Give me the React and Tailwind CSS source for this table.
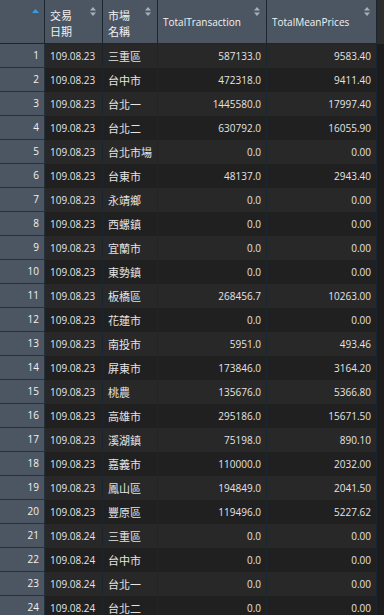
import React from "react";

const rows = [
  ["109.08.23", "三重區", "587133.0", "9583.40"],
  ["109.08.23", "台中市", "472318.0", "9411.40"],
  ["109.08.23", "台北一", "1445580.0", "17997.40"],
  ["109.08.23", "台北二", "630792.0", "16055.90"],
  ["109.08.23", "台北市場", "0.0", "0.00"],
  ["109.08.23", "台東市", "48137.0", "2943.40"],
  ["109.08.23", "永靖鄉", "0.0", "0.00"],
  ["109.08.23", "西螺鎮", "0.0", "0.00"],
  ["109.08.23", "宜蘭市", "0.0", "0.00"],
  ["109.08.23", "東勢鎮", "0.0", "0.00"],
  ["109.08.23", "板橋區", "268456.7", "10263.00"],
  ["109.08.23", "花蓮市", "0.0", "0.00"],
  ["109.08.23", "南投市", "5951.0", "493.46"],
  ["109.08.23", "屏東市", "173846.0", "3164.20"],
  ["109.08.23", "桃農", "135676.0", "5366.80"],
  ["109.08.23", "高雄市", "295186.0", "15671.50"],
  ["109.08.23", "溪湖鎮", "75198.0", "890.10"],
  ["109.08.23", "嘉義市", "110000.0", "2032.00"],
  ["109.08.23", "鳳山區", "194849.0", "2041.50"],
  ["109.08.23", "豐原區", "119496.0", "5227.62"],
  ["109.08.24", "三重區", "0.0", "0.00"],
  ["109.08.24", "台中市", "0.0", "0.00"],
  ["109.08.24", "台北一", "0.0", "0.00"],
  ["109.08.24", "台北二", "0.0", "0.00"],
];

function SortBoth() {
  return (
    <svg width="6" height="9" viewBox="0 0 6 9" className="absolute top-[7px] right-[6px]">
      <polygon points="0,3.5 3,0 6,3.5" fill="#a9b0b7" />
      <polygon points="0,5.5 6,5.5 3,9" fill="#a9b0b7" />
    </svg>
  );
}

function SortAsc() {
  return (
    <svg width="7" height="4" viewBox="0 0 7 4" className="absolute top-[9px] right-[5px]">
      <polygon points="0,4 3.5,0 7,4" fill="#3d9be0" />
    </svg>
  );
}

const cjk = { fontFamily: '"Noto Sans CJK TC", "Open Sans", sans-serif' };

export default function App() {
  return (
    <div
      className="w-[384px] h-[615px] overflow-hidden bg-[#1c1c1c] flex"
      style={{ fontFamily: '"Open Sans", "Noto Sans CJK TC", sans-serif' }}
    >
      <div className="w-[377px] grid grid-cols-[45px_58px_55px_109px_110px] auto-rows-min content-start">
        <div className="relative h-[44px] bg-[#4b5662] border-r border-b border-[#1b2631]">
          <SortAsc />
        </div>
        <div className="relative h-[44px] bg-[#4b5662] border-r border-b border-[#1b2631] flex items-center pl-[5px] pt-[2px]">
          <div className="text-[11px] leading-[16px] text-[#f2f2f2]" style={cjk}>
            交易<br />日期
          </div>
          <SortBoth />
        </div>
        <div className="relative h-[44px] bg-[#4b5662] border-r border-b border-[#1b2631] flex items-center pl-[5px] pt-[2px]">
          <div className="text-[11px] leading-[16px] text-[#f2f2f2]" style={cjk}>
            市場<br />名稱
          </div>
          <SortBoth />
        </div>
        <div className="relative h-[44px] bg-[#4b5662] border-r border-b border-[#1b2631] flex items-center pl-[5px] pt-[2px]">
          <div className="text-[10px] text-[#f2f2f2]">TotalTransaction</div>
          <SortBoth />
        </div>
        <div className="relative h-[44px] bg-[#4b5662] border-r border-b border-[#1b2631] flex items-center pl-[5px] pt-[2px]">
          <div className="text-[10px] text-[#f2f2f2]">TotalMeanPrices</div>
          <SortBoth />
        </div>

        {rows.map((r, i) => {
          const bg = i % 2 === 0 ? "bg-[#282828]" : "bg-[#202020]";
          return (
            <React.Fragment key={i}>
              <div className="h-[24px] bg-[#4b5662] border-r border-b border-[#25313c] flex items-center justify-end pr-[5px] text-[10px] text-[#f2f2f2]">
                {i + 1}
              </div>
              <div className={`h-[24px] ${bg} border-r border-[#1a2532] flex items-center pl-[5px] text-[10px] text-[#e4e4e4]`}>
                {r[0]}
              </div>
              <div className={`h-[24px] ${bg} border-r border-[#1a2532] flex items-center pl-[5px] text-[11px] text-[#e4e4e4]`} style={cjk}>
                {r[1]}
              </div>
              <div className={`h-[24px] ${bg} border-r border-[#1a2532] flex items-center justify-end pr-[5px] text-[10px] text-[#e4e4e4]`}>
                {r[2]}
              </div>
              <div className={`h-[24px] ${bg} border-r border-[#1a2532] flex items-center justify-end pr-[5px] text-[10px] text-[#e4e4e4]`}>
                {r[3]}
              </div>
            </React.Fragment>
          );
        })}
      </div>
      <div className="flex-1 flex flex-col">
        <div className="h-[44px] bg-[#2c2c2c]" />
        <div className="flex-1 bg-[#1c1c1c]" />
      </div>
    </div>
  );
}
